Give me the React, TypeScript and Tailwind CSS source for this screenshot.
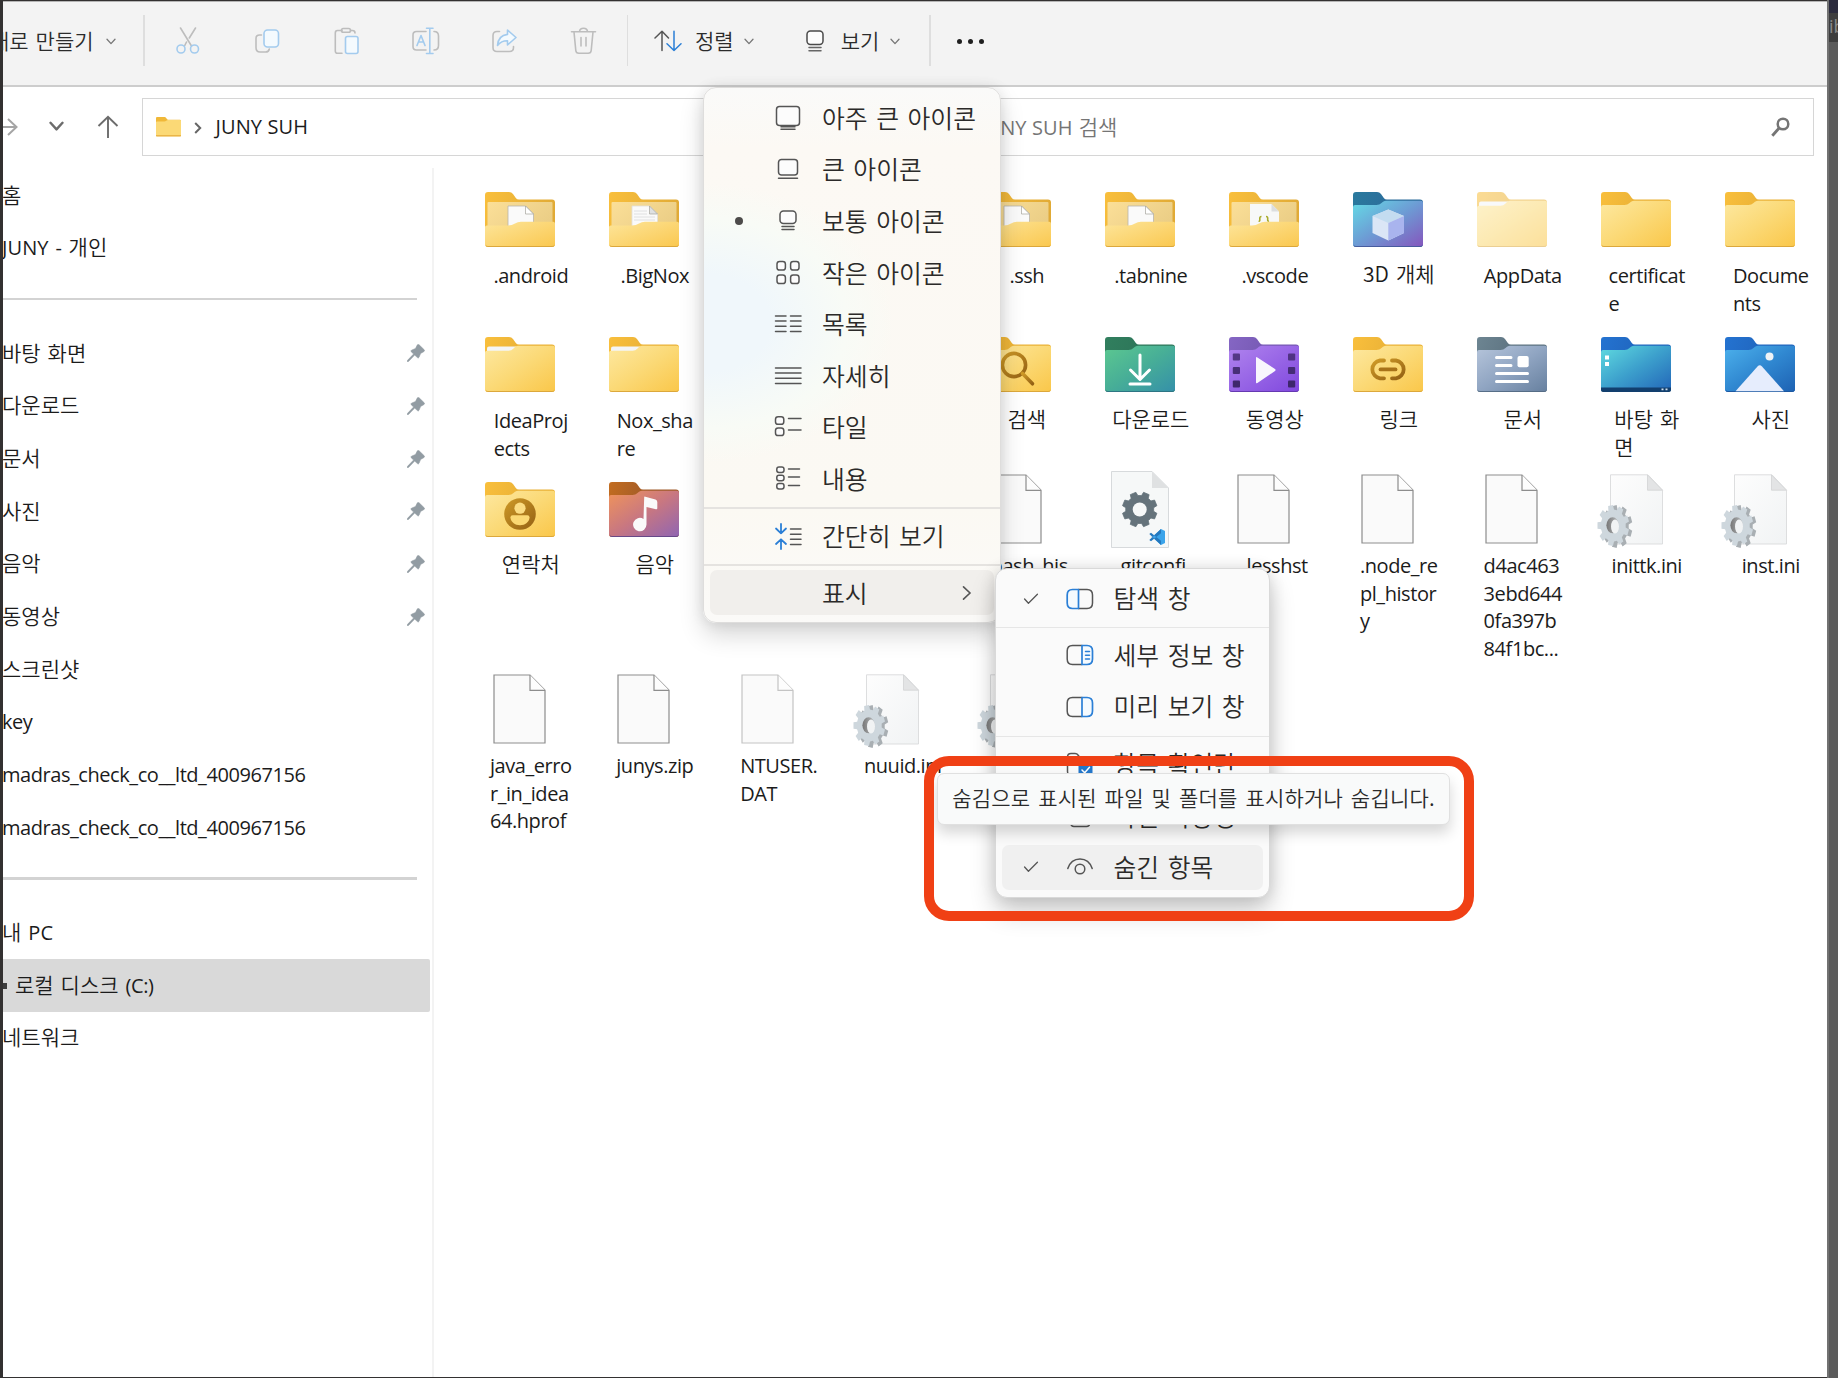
import React, { useId } from "react";

const LATIN = "font-['Open_Sans','Noto_Sans_CJK_KR',sans-serif] text-[20px] tracking-[-0.44px]";
const LATIN_CAPS = "font-['Open_Sans','Noto_Sans_CJK_KR',sans-serif] text-[20px] tracking-[0.1px]";
const HANGUL = "font-['Noto_Sans_CJK_KR',sans-serif] text-[21px] font-[350] [word-spacing:2.3px]";
const MENU_TEXT = "font-['Noto_Sans_CJK_KR',sans-serif] text-[24.8px] font-[350] [word-spacing:3px] text-[#2b2a29]";

const isHangul = (s: string) => /[\uac00-\ud7a3]/.test(s);

/* ---------- folder and file artwork ---------- */

const BACK =
  "M0 3Q0 0 3 0H24Q26.6 0 28 2L31 6.2Q32 7.5 34 7.5H67Q70 7.5 70 10.5V52Q70 55 67 55H3Q0 55 0 52Z";
const FRONT =
  "M0 15Q0 13 2 13H23.5Q26.5 13 28.5 11L30 9.7Q31.5 8.7 33.5 8.7H68Q70 8.7 70 10.7V52.5Q70 54.6 67.5 54.6H2.5Q0 54.6 0 52.5Z";
const SLIP_FRONT =
  "M0 15.5Q0 13.8 2 13.8H23.5Q26.5 13.8 28.5 11.6L30 9.9Q31.5 8.7 33.5 8.7H68Q70 8.7 70 10.7V52.5Q70 54.6 67.5 54.6H2.5Q0 54.6 0 52.5Z";
const OPEN_FRONT =
  "M0 35Q0 33.5 1.8 33.5H23Q27 33.5 30 31.4Q32.6 29.7 36 29.7H68.2Q70 29.7 70 31.5V52.5Q70 54.6 67.5 54.6H2.5Q0 54.6 0 52.5Z";

type FolderProps = {
  tab?: [string, string];
  from?: string;
  mid?: string;
  to?: string;
  edge?: string;
  slip?: boolean;
  faded?: boolean;
  children?: (id: string) => React.ReactNode;
};

function Folder({
  tab = ["#f9bf3c", "#e9b137"],
  from = "#fde8a0",
  mid = "#fbd976",
  to = "#fac74a",
  edge = "#d9a53a",
  slip,
  faded,
  children,
}: FolderProps) {
  const id = useId();
  return (
    <svg width="70" height="55" viewBox="0 0 70 55" className={faded ? "opacity-55" : ""}>
      <defs>
        <linearGradient id={id + "t"} x1="0" y1="0" x2="1" y2="0.3">
          <stop offset="0" stopColor={tab[0]} />
          <stop offset="0.6" stopColor={tab[1]} />
        </linearGradient>
        <linearGradient id={id + "b"} x1="0" y1="0" x2="1" y2="1">
          <stop offset="0" stopColor={from} />
          <stop offset="0.5" stopColor={mid} />
          <stop offset="1" stopColor={to} />
        </linearGradient>
        <linearGradient id={id + "g"} x1="0" y1="0" x2="1" y2="1">
          <stop offset="0" stopColor="#cf9a27" />
          <stop offset="1" stopColor="#946114" />
        </linearGradient>
      </defs>
      <path d={BACK} fill={`url(#${id}t)`} />
      {slip && <path d="M2 11.3Q2 9.5 4 9.5H31V14H2Z" fill="#f4f5f6" />}
      <path d={slip ? SLIP_FRONT : FRONT} fill={`url(#${id}b)`} />
      <path d="M1 53.6Q1.6 54.5 2.8 54.5H67.2Q68.5 54.5 69.2 53.6" fill="none" stroke={edge} strokeWidth="0.9" />
      {children?.(id)}
    </svg>
  );
}

function OpenFolder({ kind }: { kind: "blank" | "lines" | "code" }) {
  const id = useId();
  return (
    <svg width="70" height="55" viewBox="0 0 70 55">
      <defs>
        <linearGradient id={id + "t"} x1="0" y1="0" x2="1" y2="0.3">
          <stop offset="0" stopColor="#f9bf3c" />
          <stop offset="1" stopColor="#e0aa36" />
        </linearGradient>
        <linearGradient id={id + "i"} x1="0" y1="0" x2="1" y2="0.5">
          <stop offset="0" stopColor="#fbdf98" />
          <stop offset="1" stopColor="#ebce86" />
        </linearGradient>
        <linearGradient id={id + "b"} x1="0" y1="0" x2="1" y2="1">
          <stop offset="0" stopColor="#fde59a" />
          <stop offset="1" stopColor="#fac850" />
        </linearGradient>
      </defs>
      <path d={BACK} fill={`url(#${id}t)`} />
      <rect x="2.5" y="10" width="65" height="30" rx="1" fill={`url(#${id}i)`} />
      {kind === "code" ? (
        <>
          <path d="M21 12H42.5L50 19.5V36H21Z" fill="#f7f8f8" />
          <path d="M42.5 12V19.5H50Z" fill="#dcdedf" />
          <path d="M32.5 24.5Q30.5 24.5 30.8 27T29.6 29M37 24.5Q39 24.5 38.7 27T40 29" fill="none" stroke="#a9ab2c" strokeWidth="1.6" />
        </>
      ) : (
        <>
          <path
            d="M23 14H40.5L48.5 22V36H23Z"
            fill="#fafafa"
            stroke={kind === "blank" ? "#b9b5ab" : "#e2e0da"}
            strokeWidth="0.8"
          />
          <path d="M40.5 14V22H48.5Z" fill={kind === "blank" ? "#fff" : "#dfe1e2"} stroke="#a5a39c" strokeWidth="0.7" />
          {kind === "lines" && <path d="M25 19H38M25 22H38M25 25H46M25 28H46" stroke="#dcdedf" strokeWidth="0.9" />}
        </>
      )}
      <path d={OPEN_FRONT} fill={`url(#${id}b)`} />
      <path d="M1 53.6Q1.6 54.5 2.8 54.5H67.2Q68.5 54.5 69.2 53.6" fill="none" stroke="#d9a53a" strokeWidth="0.9" />
    </svg>
  );
}

function gearPath(cx: number, cy: number, rx: number, ry: number, teeth: number, inner: number) {
  const pts: string[] = [];
  const step = (Math.PI * 2) / teeth;
  for (let i = 0; i < teeth; i++) {
    const a = i * step + step / 2;
    [
      [-0.33, inner],
      [-0.22, 1],
      [0.22, 1],
      [0.33, inner],
    ].forEach(([o, r]) => {
      const t = a + o * step;
      pts.push(`${(cx + Math.cos(t) * rx * r).toFixed(2)} ${(cy + Math.sin(t) * ry * r).toFixed(2)}`);
    });
  }
  return "M" + pts.join("L") + "Z";
}

function BlankFile({ faded }: { faded?: boolean }) {
  const line = faded ? "#c4c4c4" : "#8d8d8d";
  return (
    <svg width="54" height="70" viewBox="0 0 54 70">
      <path d="M1 1H37L52 16.3V69H1Z" fill="#fafafa" stroke={line} strokeWidth="1.2" />
      <path d="M37 1V16.3H52" fill="#fdfdfd" stroke={line} strokeWidth="1.2" />
    </svg>
  );
}

function IniFile() {
  const id = useId();
  return (
    <svg width="84" height="84" viewBox="0 0 84 84">
      <defs>
        <linearGradient id={id + "p"} x1="0" y1="0" x2="1" y2="1">
          <stop offset="0" stopColor="#fdfdfd" />
          <stop offset="1" stopColor="#f1f3f4" />
        </linearGradient>
        <linearGradient id={id + "h"} x1="0" y1="0" x2="1" y2="0">
          <stop offset="0" stopColor="#777" />
          <stop offset="1" stopColor="#b9bcbe" />
        </linearGradient>
      </defs>
      <path d="M16.5 7.8H54L68.5 23.2V77H16.5Z" fill={`url(#${id}p)`} stroke="#d9dadb" strokeWidth="0.9" />
      <path d="M53.5 8V23.2H68.5Z" fill="#e3e4e5" stroke="#d2d3d4" strokeWidth="0.8" />
      <path d={gearPath(23, 59.5, 15.5, 21.5, 9, 0.76)} fill="#a9afb3" />
      <path d={gearPath(19.3, 58.5, 16, 20.5, 9, 0.78)} fill="#ced7dd" />
      <ellipse cx="18.6" cy="58.3" rx="6.2" ry="8" fill={`url(#${id}h)`} />
      <ellipse cx="21" cy="59.5" rx="4" ry="7" fill="#f1f3f4" />
    </svg>
  );
}

function ConfigFile() {
  return (
    <svg width="58" height="77" viewBox="0 0 58 77">
      <path d="M0.5 0.5H41L57.5 17V76.5H0.5Z" fill="#f6f8f8" stroke="#d3d6d8" strokeWidth="0.9" />
      <path d="M41 0.5V17H57.5Z" fill="#dfe1e2" />
      <path d={gearPath(28.7, 38.5, 17.6, 17.6, 8, 0.8)} fill="#65737b" strokeLinejoin="round" stroke="#65737b" strokeWidth="0.8" />
      <circle cx="28.7" cy="38.5" r="7" fill="#f6f8f8" />
      <path d="M50 58L54 60V72L50 74L40.5 65.5V66.5Z" fill="#3ba4ea" />
      <path d="M50 62.3L40 70.3L38.3 69L50 58ZM50 69.8L40 61.8L38.3 63L50 74Z" fill="#2478be" />
    </svg>
  );
}

const contact = (id: string) => (
  <>
    <circle cx="35" cy="32" r="15.8" fill={`url(#${id}g)`} />
    <circle cx="35" cy="26.2" r="5.6" fill="#fbdc82" />
    <path d="M25.5 35.3Q25.5 33.2 27.6 33.2H42.4Q44.5 33.2 44.5 35.3C44.5 40 40 43.3 35 43.3S25.5 40 25.5 35.3Z" fill="#fbd873" />
  </>
);
const music = () => (
  <path d="M35.2 15.2Q35.3 14.3 36.3 14.7L46.5 17.6Q48.3 18.2 48.3 20V26.3Q48.3 27.6 47 27.2L37.5 25V42.5A6.7 6.7 0 1 1 34.5 37Z" fill="#fafafa" />
);
const search = (id: string) => (
  <g fill="none" stroke={`url(#${id}g)`} strokeWidth="3.6" strokeLinecap="round">
    <circle cx="33" cy="28" r="11.6" />
    <path d="M41.5 36.5L51.5 46.8" />
  </g>
);
const download = () => (
  <path d="M35 18V42M25.5 33L35 42.5L44.5 33M25 47H45" fill="none" stroke="#fff" strokeWidth="3" strokeLinecap="round" strokeLinejoin="round" />
);
const video = () => (
  <>
    {[16.5, 30, 43.5].map((y) => (
      <g key={y} fill="#3a2566" opacity={0.65 + y / 140}>
        <rect x="3.8" y={y} width="7.2" height="7" rx="1" />
        <rect x="59" y={y} width="7.2" height="7" rx="1" />
      </g>
    ))}
    <path d="M27 21Q27 19.5 28.4 20.4L46 32Q47.2 33 46 34L28.4 46Q27 47 27 45.3Z" fill="#f8f6fd" />
  </>
);
const link = (id: string) => (
  <g fill="none" stroke={`url(#${id}g)`} strokeWidth="3.8" strokeLinecap="round">
    <path d="M31 23.5H27A9 9 0 0 0 27 41.3H31M39 23.5H43A9 9 0 0 1 43 41.3H39" />
    <path d="M27.5 32.4H42.5" stroke="#a87219" />
  </g>
);
const documentLines = () => (
  <>
    <path d="M19.5 20.5H34M19.5 28.5H34M19.5 36.5H50.5M19.5 44.5H50.5" stroke="#fff" strokeWidth="3" strokeLinecap="round" />
    <rect x="40.5" y="19" width="11.2" height="11.3" rx="2" fill="#fff" />
  </>
);
const desktop = () => (
  <>
    <path d="M0 50.5H70V52.5Q70 55 67.5 55H2.5Q0 55 0 52.5Z" fill="#123f6e" />
    <path d="M4 18.5H8V22.5H4ZM4 25H8V29H4Z" fill="#fff" />
    <path d="M60.5 51.5H62.5V53.3H60.5ZM64.5 51.5H66.5V53.3H64.5Z" fill="#cfe0ee" />
  </>
);
const picture = () => (
  <>
    <circle cx="44.5" cy="19.6" r="4" fill="#eef2f6" />
    <path d="M10.5 54.3L32.5 29.5Q34.7 27.2 37 29.5L59 54.3Z" fill="#e6edfd" />
  </>
);
const cube = () => (
  <>
    <path d="M35.3 17.5L51 24V41L35.3 48.5L19.5 41V24Z" fill="#dbe6f6" />
    <path d="M35.3 17.5L51 24L35.3 31L19.5 24Z" fill="#c3dcf0" />
    <path d="M35.3 31L51 24V41L35.3 48.5Z" fill="#a9b4ee" />
  </>
);

/* ---------- file grid ---------- */

type Item = { icon: React.ReactNode; label: string } | null;

const rows: { height: string; items: Item[] }[] = [
  {
    height: "h-[145px]",
    items: [
      { icon: <OpenFolder kind="blank" />, label: ".android" },
      { icon: <OpenFolder kind="lines" />, label: ".BigNox" },
      null,
      null,
      { icon: <OpenFolder kind="blank" />, label: ".ssh" },
      { icon: <OpenFolder kind="blank" />, label: ".tabnine" },
      { icon: <OpenFolder kind="code" />, label: ".vscode" },
      {
        icon: (
          <Folder tab={["#2a7a9e", "#2c6c9b"]} from="#64dbe6" mid="#6d9bd4" to="#8556bd" edge="#46599c">
            {cube}
          </Folder>
        ),
        label: "3D 개체",
      },
      { icon: <Folder slip faded />, label: "AppData" },
      { icon: <Folder />, label: "certificat\ne" },
      { icon: <Folder />, label: "Docume\nnts" },
    ],
  },
  {
    height: "h-[145px]",
    items: [
      { icon: <Folder slip />, label: "IdeaProj\nects" },
      { icon: <Folder slip />, label: "Nox_sha\nre" },
      null,
      null,
      { icon: <Folder>{search}</Folder>, label: "검색" },
      {
        icon: (
          <Folder tab={["#317f5e", "#2d7559"]} from="#5cc890" mid="#47ae97" to="#3590a9" edge="#2c7384">
            {download}
          </Folder>
        ),
        label: "다운로드",
      },
      {
        icon: (
          <Folder tab={["#8566c4", "#7558b2"]} from="#b084ee" mid="#9866e6" to="#8048de" edge="#6236ae">
            {video}
          </Folder>
        ),
        label: "동영상",
      },
      { icon: <Folder>{link}</Folder>, label: "링크" },
      {
        icon: (
          <Folder tab={["#6d8592", "#5c7280"]} from="#b6c5db" mid="#90a5c2" to="#67809f" edge="#546b84">
            {documentLines}
          </Folder>
        ),
        label: "문서",
      },
      {
        icon: (
          <Folder tab={["#2473d1", "#2065bd"]} from="#5fdbe0" mid="#3c9fcc" to="#2265b8">
            {desktop}
          </Folder>
        ),
        label: "바탕 화\n면",
      },
      {
        icon: (
          <Folder tab={["#2473d1", "#2065bd"]} from="#4cb1ec" mid="#3088d1" to="#1e62b3" edge="#1b559c">
            {picture}
          </Folder>
        ),
        label: "사진",
      },
    ],
  },
  {
    height: "h-[200px]",
    items: [
      { icon: <Folder>{contact}</Folder>, label: "연락처" },
      {
        icon: (
          <Folder tab={["#c36d20", "#9f5a29"]} from="#f0945a" mid="#c87781" to="#9065b2" edge="#60468d">
            {music}
          </Folder>
        ),
        label: "음악",
      },
      null,
      null,
      { icon: <BlankFile />, label: ".bash_his\ntory" },
      { icon: <ConfigFile />, label: ".gitconfi\ng" },
      { icon: <BlankFile />, label: ".lesshst" },
      { icon: <BlankFile />, label: ".node_re\npl_histor\ny" },
      { icon: <BlankFile />, label: "d4ac463\n3ebd644\n0fa397b\n84f1bc..." },
      { icon: <IniFile />, label: "inittk.ini" },
      { icon: <IniFile />, label: "inst.ini" },
    ],
  },
  {
    height: "h-[200px]",
    items: [
      { icon: <BlankFile />, label: "java_erro\nr_in_idea\n64.hprof" },
      { icon: <BlankFile />, label: "junys.zip" },
      { icon: <BlankFile faded />, label: "NTUSER.\nDAT" },
      { icon: <IniFile />, label: "nuuid.ini" },
      { icon: <IniFile />, label: "osinfo.i\nni" },
    ],
  },
];

function FileGrid() {
  return (
    <main className="min-w-0 flex-1 pt-[9.5px] pl-[24.3px]">
      {rows.map((row, r) => (
        <div key={r} className={`grid grid-cols-[repeat(11,124px)] ${row.height}`}>
          {row.items.map((item, c) => (
            <div key={c} className="flex flex-col items-center">
              {item && (
                <>
                  <div className="flex h-[84px] w-[84px] items-center justify-center">{item.icon}</div>
                  <div
                    className={`ml-[21px] leading-[27.5px] whitespace-pre text-[#1b1b1b] ${
                      isHangul(item.label) ? `-mt-[1px] ${HANGUL}` : `mt-[1px] ${LATIN}`
                    }`}
                  >
                    {item.label}
                  </div>
                </>
              )}
            </div>
          ))}
        </div>
      ))}
    </main>
  );
}

/* ---------- toolbar ---------- */

const G = "#bdbdbd";
const B = "#a3cbee";

function Chevron({ className = "", size = 10, color = "#777", width = 1.3 }: { className?: string; size?: number; color?: string; width?: number }) {
  return (
    <svg className={`shrink-0 ${className}`} width={size} height={size * 0.7} viewBox="0 0 10 7" fill="none" stroke={color} strokeWidth={width} strokeLinecap="round" strokeLinejoin="round">
      <path d="M1 1.2L5 5.6L9 1.2" />
    </svg>
  );
}

function MediumIconsGlyph() {
  return (
    <svg width="18" height="22" viewBox="0 0 18 22" fill="none" stroke="#4a4a4a" strokeWidth="1.5" strokeLinecap="round">
      <rect x="1" y="1" width="16" height="13.5" rx="3.4" fill="#fff" fillOpacity="0.7" />
      <path d="M3 17.5H15M3 20.8H15" stroke="#666" />
    </svg>
  );
}

const toolIcons: { name: string; art: React.ReactNode }[] = [
  {
    name: "cut",
    art: (
      <>
        <path d="M5.5 1L16.5 19M20.5 1L14.3 11M11.5 15L9.5 19" stroke={G} />
        <circle cx="6" cy="22" r="4" stroke={B} />
        <circle cx="19.5" cy="22" r="4" stroke={B} />
      </>
    ),
  },
  {
    name: "copy",
    art: (
      <>
        <path d="M7.5 8H5.5Q2 8 2 11.5V20.5Q2 25 6 25H11.5Q14.8 25 15.3 22" stroke={G} />
        <rect x="10" y="3" width="14.5" height="17" rx="3.5" stroke={B} fill="#f4fafe" />
      </>
    ),
  },
  {
    name: "paste",
    art: (
      <>
        <path d="M9 3.5H4.5Q2.3 3.5 2.3 6V24Q2.3 26.3 4.5 26.3H9M17.5 3.5H19.5Q22 3.5 22 6" stroke={G} />
        <rect x="8.5" y="1.5" width="9" height="3.8" rx="1.8" stroke={G} />
        <rect x="12.5" y="9.5" width="12.5" height="17" rx="2" stroke={B} fill="#f4fafe" />
      </>
    ),
  },
  {
    name: "rename",
    art: (
      <>
        <path d="M14 4.5H4.5Q1 4.5 1 8V19.5Q1 23 4.5 23H14M22 4.5Q26.5 4.5 26.5 9V18.5Q26.5 23 22 23" stroke={G} />
        <path d="M5 18.5L9 8.5L13 18.5M6.4 15H11.6M17.8 1.5V26.5M14.5 1.2H21M14.5 26.5H21" stroke={B} />
      </>
    ),
  },
  {
    name: "share",
    art: (
      <>
        <path d="M8.5 4.5H6Q2 4.5 2 8.5V20.5Q2 24.5 6 24.5H18.5Q22.5 24.5 22.5 20.5V19.5" stroke={G} />
        <path d="M16.5 3L25 10.5L16.5 18V13.8Q10.5 13.6 6.5 18.5Q7.2 8.5 16.5 7.4Z" stroke={B} fill="#f4fafe" />
      </>
    ),
  },
  {
    name: "delete",
    art: (
      <>
        <path d="M1.5 4.8H25.5M9.5 4.5Q9.8 1.2 13.5 1.2T17.5 4.5M4 5L5.8 23.5Q6.1 26.3 8.8 26.3H18.2Q20.9 26.3 21.2 23.5L23 5M11 10.5V19M16 10.5V19" stroke={G} />
      </>
    ),
  },
];

function Toolbar() {
  return (
    <header className="flex h-[84.5px] shrink-0 items-start border-b-[2px] border-[#cdcdcd] bg-[#f3f3f3] text-[#2b2b2b]">
      <div className="flex h-[78px] w-[140px] items-center overflow-hidden">
        <span className={`-mt-[2px] -ml-[13px] leading-[30px] whitespace-nowrap ${HANGUL}`}>새로 만들기</span>
        <Chevron className="ml-[12px]" />
      </div>
      <div className="mt-[13px] h-[51px] w-[1.5px] bg-[#dedede]" />
      <div className="flex h-[78px] items-center gap-[51px] pl-[30px]">
        {toolIcons.map((t) => (
          <svg key={t.name} width="28" height="28" viewBox="0 0 28 28" fill="none" strokeWidth="1.6" strokeLinecap="round" strokeLinejoin="round">
            {t.art}
          </svg>
        ))}
      </div>
      <div className="mt-[13px] ml-[29px] h-[51px] w-[1.5px] bg-[#dedede]" />
      <div className="flex h-[78px] w-[301px] items-center pl-[26px]">
        <svg width="28" height="22" viewBox="0 0 28 22" fill="none" strokeWidth="1.5" strokeLinecap="round" strokeLinejoin="round">
          <path d="M8 20.5V1.2M1 8L8 1.2L14.5 8" stroke="#555" />
          <path d="M20 1.2V20.5M13 13.8L20 20.5L27 13.8" stroke="#2b7fd6" />
        </svg>
        <span className={`-mt-[2px] ml-[13px] leading-[30px] ${HANGUL}`}>정렬</span>
        <Chevron className="ml-[10px]" />
        <span className="ml-[52px]">
          <MediumIconsGlyph />
        </span>
        <span className={`-mt-[2px] ml-[17px] leading-[30px] ${HANGUL}`}>보기</span>
        <Chevron className="ml-[11px]" />
      </div>
      <div className="mt-[13px] h-[51px] w-[1.5px] bg-[#dedede]" />
      <div className="flex h-[79px] items-center gap-[5.5px] pl-[26px]">
        <i className="h-[5.5px] w-[5.5px] rounded-full bg-[#1f1f1f]" />
        <i className="h-[5.5px] w-[5.5px] rounded-full bg-[#1f1f1f]" />
        <i className="h-[5.5px] w-[5.5px] rounded-full bg-[#1f1f1f]" />
      </div>
    </header>
  );
}

/* ---------- address bar ---------- */

function AddressRow() {
  return (
    <div className="flex h-[81px] shrink-0 items-start pt-[11px]">
      <div className="flex h-[58px] w-[139px] items-center">
        <svg width="15" height="20" viewBox="0 0 15 20" fill="none" stroke="#a5a5a5" strokeWidth="2">
          <path d="M0 10H13.5M5 2L13.5 10L5 18" />
        </svg>
        <Chevron className="ml-[31px]" size={15} color="#6c6c6c" width={1.6} />
        <svg className="ml-[33px]" width="22" height="24" viewBox="0 0 22 24" fill="none" stroke="#6c6c6c" strokeWidth="1.9">
          <path d="M11 23V2M1.5 11L11 1.8L20.5 11" />
        </svg>
      </div>
      <div className="flex h-[58px] w-[818px] items-center border border-[#d6d6d6] pl-[13px]">
        <svg width="25" height="20" viewBox="0 0 70 57" preserveAspectRatio="none">
          <path d={BACK} fill="#f0b838" />
          <path d={FRONT} fill="#fbd976" />
          <path d="M0 52H70V55H0Z" fill="#e5a93a" />
        </svg>
        <svg className="mt-[2px] ml-[13px]" width="8" height="12" viewBox="0 0 8 12" fill="none" stroke="#666" strokeWidth="2">
          <path d="M1.2 1L6.2 6L1.2 11" />
        </svg>
        <span className={`mt-[1px] ml-[13.5px] text-[#1b1b1b] ${LATIN_CAPS}`}>JUNY SUH</span>
      </div>
      <div className="ml-[8px] flex h-[58px] w-[846px] items-center justify-between border border-[#d6d6d6] pr-[23px] pl-[11px] text-[#757575]">
        <span className="whitespace-nowrap">
          <span className={LATIN_CAPS}>JUNY SUH </span>
          <span className={`ml-[1px] ${HANGUL}`}>검색</span>
        </span>
        <svg width="19" height="20" viewBox="0 0 19 20" fill="none" stroke="#757575">
          <circle cx="12" cy="7" r="5.3" strokeWidth="2.5" />
          <path d="M8 11.3L1.3 18.7" strokeWidth="2.9" />
        </svg>
      </div>
    </div>
  );
}

/* ---------- sidebar ---------- */

type NavEntry = { text: string; pin?: boolean; active?: boolean } | "separator";

const nav: NavEntry[] = [
  { text: "홈" },
  { text: "JUNY - 개인" },
  "separator",
  { text: "바탕 화면", pin: true },
  { text: "다운로드", pin: true },
  { text: "문서", pin: true },
  { text: "사진", pin: true },
  { text: "음악", pin: true },
  { text: "동영상", pin: true },
  { text: "스크린샷" },
  { text: "key" },
  { text: "madras_check_co__ltd_400967156" },
  { text: "madras_check_co__ltd_400967156" },
  "separator",
  { text: "내 PC" },
  { text: "로컬 디스크 (C:)", active: true },
  { text: "네트워크" },
];

function Mixed({ text }: { text: string }) {
  return (
    <span className="whitespace-pre">
      {text.split(/([A-Za-z0-9_():-]+)/).map((part, i) => (
        <span key={i} className={i % 2 ? (/^[A-Z]+$/.test(part) ? LATIN_CAPS : LATIN) : HANGUL}>
          {part}
        </span>
      ))}
    </span>
  );
}

function Sidebar() {
  return (
    <nav className="w-[431px] shrink-0 border-r-2 border-[#f3f3f3] pt-[1.5px]">
      {nav.map((entry, i) =>
        entry === "separator" ? (
          <div key={i} className="h-[52.67px] pt-[23.5px]">
            <div className="h-[2.5px] w-[414px] bg-[#d3d3d3]" />
          </div>
        ) : (
          <div
            key={i}
            className={`flex h-[52.67px] items-center overflow-hidden text-[#1b1b1b] ${
              entry.active ? "w-[426.5px] rounded-r-[2px] bg-[#d9d9d9]" : "w-[422px]"
            }`}
          >
            {entry.active && <i className="mt-[2px] mr-[8px] -ml-[1px] h-[6px] w-[5px] bg-[#3c3c3c]" />}
            <span className={`flex-1 leading-[30px] ${entry.active ? "" : "-ml-[1px]"}`}>
              <Mixed text={entry.text} />
            </span>
            {entry.pin && (
              <svg width="18" height="18" viewBox="0 0 18 18" fill="#929ca3" stroke="#929ca3" strokeWidth="0.6">
                <path d="M10.4 0.8Q11.2 0 12.1 0.8L17.2 5.8Q18 6.8 17 7.5L13.6 9.4L12 13.3Q11.4 14.5 10.4 13.6L7.7 11L1.4 17.6L0.3 17.7L0.3 16.6L6.6 10L4.2 7.7Q3.4 6.7 4.5 6.2L8.5 4.5Z" />
              </svg>
            )}
          </div>
        ),
      )}
    </nav>
  );
}

/* ---------- menus ---------- */

const K = "#555";
const U = "#2b7fd6";

const viewMenu: { text: string; dot?: boolean; art: React.ReactNode }[] = [
  {
    text: "아주 큰 아이콘",
    art: (
      <>
        <rect x="2.5" y="2.5" width="23" height="19" rx="3" fill="#fcfcfc" />
        <path d="M7 22.8H21M7 25.3H21" />
      </>
    ),
  },
  {
    text: "큰 아이콘",
    art: (
      <>
        <rect x="4.5" y="4.5" width="19" height="15.5" rx="3" fill="#fcfcfc" />
        <path d="M4.5 23.3H23.5" />
      </>
    ),
  },
  {
    text: "보통 아이콘",
    dot: true,
    art: (
      <>
        <rect x="6" y="4" width="16" height="12.5" rx="3.5" fill="#fcfcfc" />
        <path d="M8 19.5H20M8 22.6H20" />
      </>
    ),
  },
  {
    text: "작은 아이콘",
    art: (
      <g fill="#fcfcfc">
        <rect x="3" y="2.5" width="8.4" height="8.6" rx="2.6" />
        <rect x="16.6" y="2.5" width="8.4" height="8.6" rx="2.6" />
        <rect x="3" y="16" width="8.4" height="8.6" rx="2.6" />
        <rect x="16.6" y="16" width="8.4" height="8.6" rx="2.6" />
      </g>
    ),
  },
  { text: "목록", art: <path d="M1.5 6H12M16.5 6H27M1.5 11H12M16.5 11H27M1.5 16.2H12M16.5 16.2H27M1.5 21.5H12M16.5 21.5H27" /> },
  { text: "자세히", art: <path d="M1.5 6H27M1.5 11H27M1.5 16.2H27M1.5 21.5H27" /> },
  {
    text: "타일",
    art: (
      <>
        <rect x="1.5" y="3.8" width="8.3" height="7.5" rx="2.6" fill="#fcfcfc" />
        <rect x="1.5" y="15" width="8.3" height="7.5" rx="2.6" fill="#fcfcfc" />
        <path d="M14.5 5.5H27M14.5 17H27" />
      </>
    ),
  },
  {
    text: "내용",
    art: (
      <>
        <rect x="2.8" y="2" width="7.2" height="5.4" rx="2.2" fill="#fcfcfc" />
        <rect x="2.8" y="10.3" width="7.2" height="5.4" rx="2.2" fill="#fcfcfc" />
        <rect x="2.8" y="18.6" width="7.2" height="5.4" rx="2.2" fill="#fcfcfc" />
        <path d="M14.5 4H25.5M14.5 12H25.5M14.5 20.4H25.5" />
      </>
    ),
  },
];

function MenuGlyph({ children }: { children?: React.ReactNode }) {
  return (
    <svg className="shrink-0" width="28" height="28" viewBox="0 0 28 28" fill="none" stroke={K} strokeWidth="1.5" strokeLinecap="round" strokeLinejoin="round">
      {children}
    </svg>
  );
}

function ViewMenu() {
  return (
    <div className="absolute top-[87px] left-[703px] h-[536px] w-[298px] rounded-[13px] border border-[#dedddc] bg-[radial-gradient(ellipse_190px_140px_at_0px_235px,#f0f7fb_35%,#f8fbf6_75%,transparent_100%),linear-gradient(180deg,#fafaf9_0,#fcf9f4_60px,#fbf9f3_420px,#fbfaf8_100%)] pt-[4px] shadow-[0_12px_24px_rgba(0,0,0,0.16),0_0_14px_rgba(0,0,0,0.09)]">
      {viewMenu.map((m) => (
        <div key={m.text} className="flex h-[51.6px] items-center">
          <span className="flex w-[70px] justify-center">{m.dot && <i className="h-[7.5px] w-[7.5px] rounded-full bg-[#4c4b4a]" />}</span>
          <MenuGlyph>{m.art}</MenuGlyph>
          <span className={`-mt-[2px] ml-[20px] leading-[34px] whitespace-nowrap ${MENU_TEXT}`}>{m.text}</span>
        </div>
      ))}
      <div className="mt-[2.5px] h-[1.5px] bg-[#e5e3e0]" />
      <div className="mt-[1.5px] flex h-[51.6px] items-center pl-[70px]">
        <MenuGlyph>
          <path d="M7 2V11.3M2 6.5L7 11.3L12 6.5M7 27V17.5M2 22L7 17.3L12 22" stroke={U} strokeWidth="1.8" />
          <path d="M16.5 7H27M16.5 12.2H27M16.5 17.3H27M16.5 22.5H27" />
        </MenuGlyph>
        <span className={`-mt-[2px] ml-[20px] leading-[34px] whitespace-nowrap ${MENU_TEXT}`}>간단히 보기</span>
      </div>
      <div className="mt-[2.5px] h-[1.5px] bg-[#e5e3e0]" />
      <div className="mx-[6px] mt-[4px] flex h-[45px] items-center rounded-[7px] bg-[#f1efec] pl-[112px]">
        <span className={`leading-[34px] ${MENU_TEXT}`}>표시</span>
        <svg className="mt-[1px] mr-[22px] ml-auto" width="10" height="16" viewBox="0 0 10 16" fill="none" stroke="#555" strokeWidth="1.6" strokeLinecap="round">
          <path d="M1.5 1.8L8 8L1.5 14.2" />
        </svg>
      </div>
    </div>
  );
}

const Check = () => (
  <svg width="16" height="12" viewBox="0 0 18 14" fill="none" stroke="#555" strokeWidth="1.5" strokeLinecap="round" strokeLinejoin="round">
    <path d="M1.5 7L6 12L16.5 1.5" />
  </svg>
);

function ShowRow({ text, checked, art, className = "" }: { text: string; checked?: boolean; art: React.ReactNode; className?: string }) {
  return (
    <div className={`flex items-center ${className}`}>
      <span className="mr-[6px] flex w-[58px] justify-center">{checked && <Check />}</span>
      <MenuGlyph>{art}</MenuGlyph>
      <span className={`-mt-[3px] ml-[19.5px] leading-[34px] whitespace-nowrap ${MENU_TEXT}`}>{text}</span>
    </div>
  );
}

function ShowMenu() {
  return (
    <div className="absolute top-[568px] left-[995px] h-[330px] w-[275px] rounded-[12px] border border-[#d9d9d9] bg-[#fafafa] pt-[4px] shadow-[0_14px_26px_rgba(0,0,0,0.2),0_0_16px_rgba(0,0,0,0.12)]">
      <ShowRow
        className="h-[51px] px-[6px]"
        text="탐색 창"
        checked
        art={
          <>
            <path d="M12.5 4.5H21Q26.5 4.5 26.5 10V18Q26.5 23.5 21 23.5H12.5" />
            <path d="M12.5 4.5V23.5H6.5Q1.2 23.5 1.2 18V10Q1.2 4.5 6.5 4.5Z" stroke={U} fill="#f5fafe" strokeWidth="1.7" />
          </>
        }
      />
      <div className="mt-[2.5px] h-[1.5px] bg-[#e6e6e6]" />
      <ShowRow
        className="mt-[1.5px] h-[51.6px] px-[6px]"
        text="세부 정보 창"
        art={
          <>
            <path d="M16 4.5H6.5Q1.2 4.5 1.2 10V18Q1.2 23.5 6.5 23.5H16" />
            <path d="M16 4.5V23.5H21Q26.5 23.5 26.5 18V10Q26.5 4.5 21 4.5Z" stroke={U} fill="#f5fafe" strokeWidth="1.7" />
            <path d="M19.5 10.5H23.5M19.5 14.3H23.5M19.5 18H23.5" stroke={U} />
          </>
        }
      />
      <ShowRow
        className="h-[51.6px] px-[6px]"
        text="미리 보기 창"
        art={
          <>
            <path d="M16 4.5H6.5Q1.2 4.5 1.2 10V18Q1.2 23.5 6.5 23.5H16" />
            <path d="M16 4.5V23.5H21Q26.5 23.5 26.5 18V10Q26.5 4.5 21 4.5Z" stroke={U} fill="#f5fafe" strokeWidth="1.7" />
          </>
        }
      />
      <div className="mt-[3px] h-[1.5px] bg-[#e6e6e6]" />
      <ShowRow
        className="mt-[1.5px] h-[51.6px] px-[6px]"
        text="항목 확인란"
        art={
          <>
            <path d="M10 25H5Q1.5 25 1.5 21.5V7Q1.5 3.5 5 3.5H9Q11 3.5 12 5L13.5 7H21Q24.5 7 24.5 10.5" />
            <rect x="12.5" y="13" width="14" height="14" rx="2" fill="#2478cc" stroke="none" />
            <path d="M16 20L18.7 22.7L23.5 17.3" stroke="#fff" />
          </>
        }
      />
      <ShowRow
        className="h-[51.6px] px-[6px]"
        text="파일 확장명"
        art={
          <>
            <rect x="5" y="2" width="18.5" height="22.5" rx="3" />
            <path d="M8.5 20.5H13" stroke={U} strokeWidth="2" />
          </>
        }
      />
      <ShowRow
        className="mx-[6px] mt-[3px] h-[45px] rounded-[7px] bg-[#f0f0f0]"
        text="숨긴 항목"
        checked
        art={
          <>
            <path d="M1.8 15.5Q5 6 14 6T26.2 15.5" />
            <circle cx="14" cy="16" r="4.8" />
          </>
        }
      />
    </div>
  );
}

function Tooltip() {
  return (
    <div
      className="absolute top-[773px] left-[937px] flex h-[52px] w-[513px] items-center justify-center rounded-[7px] border border-[#e0e0e0] bg-[#f9fafa] pb-[4px] font-['Noto_Sans_CJK_KR',sans-serif] text-[21px] leading-[30px] font-[350] tracking-[0.2px] whitespace-nowrap text-[#2b2b2b] shadow-[0_8px_14px_rgba(0,0,0,0.16)] [word-spacing:3px]"
    >
      숨김으로 표시된 파일 및 폴더를 표시하거나 숨깁니다.
    </div>
  );
}

export default function App() {
  return (
    <div className="relative flex h-[1378px] w-[1838px] overflow-hidden bg-[#333131]">
      <div className="mt-[1px] mb-[1px] ml-[3px] flex w-[1824px] shrink-0 flex-col border-t border-[#b5b5b5] bg-white">
        <Toolbar />
        <AddressRow />
        <div className="flex min-h-0 flex-1">
          <Sidebar />
          <FileGrid />
        </div>
      </div>
      <aside className="w-[11px] shrink-0 overflow-hidden border-l-2 border-[#727272] bg-[#5b5b5b]">
        <div className="h-[13px] bg-[#2b2b3d]" />
        <div className="h-[29px] bg-[#3e3e3e] pt-[1px] font-['Open_Sans',sans-serif] text-[18px] leading-[24px] text-[#8a8a8a]">ib</div>
      </aside>
      <ViewMenu />
      <ShowMenu />
      <Tooltip />
      <div className="absolute top-[756px] left-[924px] h-[165px] w-[550px] rounded-[25px] border-[10px] border-[#f04015]" />
    </div>
  );
}
